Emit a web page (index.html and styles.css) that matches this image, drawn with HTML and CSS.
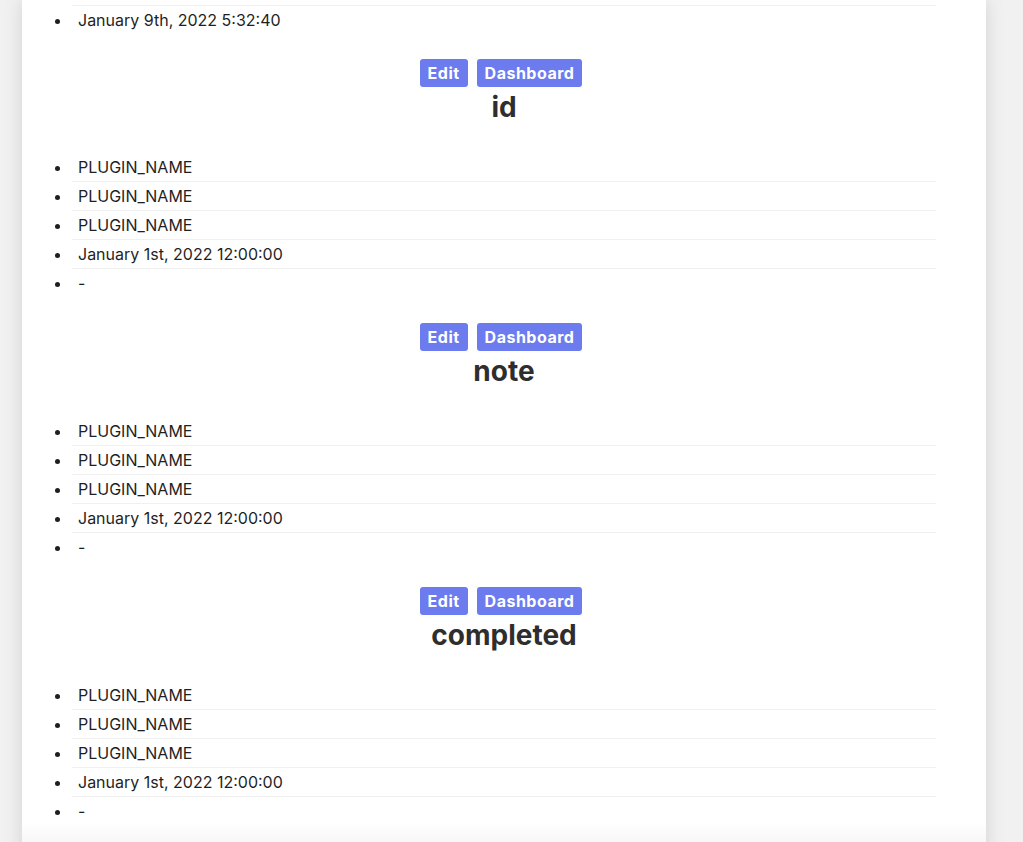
FILE: index.html
```html
<!DOCTYPE html>
<html lang="en">
<head>
<meta charset="utf-8">
<title>Items</title>
<link rel="stylesheet" href="styles.css">
</head>
<body>
<div class="card">
  <ul class="fields fields-top">
    <li>January 9th, 2022 5:32:40</li>
  </ul>

  <section class="item">
    <div class="actions">
      <button class="btn">Edit</button>
      <button class="btn">Dashboard</button>
    </div>
    <h2 class="item-title">id</h2>
    <ul class="fields">
      <li>PLUGIN_NAME</li>
      <li>PLUGIN_NAME</li>
      <li>PLUGIN_NAME</li>
      <li>January 1st, 2022 12:00:00</li>
      <li>-</li>
    </ul>
  </section>

  <section class="item">
    <div class="actions">
      <button class="btn">Edit</button>
      <button class="btn">Dashboard</button>
    </div>
    <h2 class="item-title">note</h2>
    <ul class="fields">
      <li>PLUGIN_NAME</li>
      <li>PLUGIN_NAME</li>
      <li>PLUGIN_NAME</li>
      <li>January 1st, 2022 12:00:00</li>
      <li>-</li>
    </ul>
  </section>

  <section class="item">
    <div class="actions">
      <button class="btn">Edit</button>
      <button class="btn">Dashboard</button>
    </div>
    <h2 class="item-title">completed</h2>
    <ul class="fields">
      <li>PLUGIN_NAME</li>
      <li>PLUGIN_NAME</li>
      <li>PLUGIN_NAME</li>
      <li>January 1st, 2022 12:00:00</li>
      <li>-</li>
    </ul>
  </section>
</div>
<div class="bottom-fade"></div>
</body>
</html>
```

FILE: styles.css
```css
html, body {
  margin: 0;
  padding: 0;
  background: #f1f1f1;
  font-family: Inter, "Open Sans", sans-serif;
  color: #1f1f1f;
}

.card {
  width: 964px;
  margin: 0 0 0 22px;
  padding-top: 5px;
  padding-bottom: 60px;
  background: #ffffff;
  box-shadow: 0 0 18px rgba(0, 0, 0, 0.13);
}

.fields {
  margin: 0 50px 25px 50px;
  padding: 0;
  list-style: disc outside;
}

.fields li {
  font-size: 16px;
  line-height: 20px;
  padding: 4px 0 4px 6px;
  border-bottom: 1px solid #f0f0f0;
}

.fields li:last-child {
  border-bottom-color: transparent;
}

.fields-top li:first-child {
  border-top: 1px solid #f0f0f0;
}

.fields-top li:last-child {
  border-bottom: none;
}

.actions {
  display: flex;
  justify-content: center;
  gap: 9px;
  padding-right: 6px;
}

.btn {
  height: 28px;
  padding: 0 8px;
  border: none;
  border-radius: 3px;
  background: #6c7cee;
  color: #ffffff;
  font-family: inherit;
  font-size: 16px;
  letter-spacing: 0.5px;
  font-weight: 700;
}

.item-title {
  margin: 0 0 29px 0;
  padding-top: 3px;
  text-align: center;
  font-size: 28px;
  line-height: 34px;
  font-weight: 700;
  color: #2e2e2e;
}

.bottom-fade {
  position: fixed;
  left: 22px;
  bottom: 0;
  width: 964px;
  height: 20px;
  background: linear-gradient(to bottom, rgba(0, 0, 0, 0), rgba(0, 0, 0, 0.03));
  pointer-events: none;
}
```
